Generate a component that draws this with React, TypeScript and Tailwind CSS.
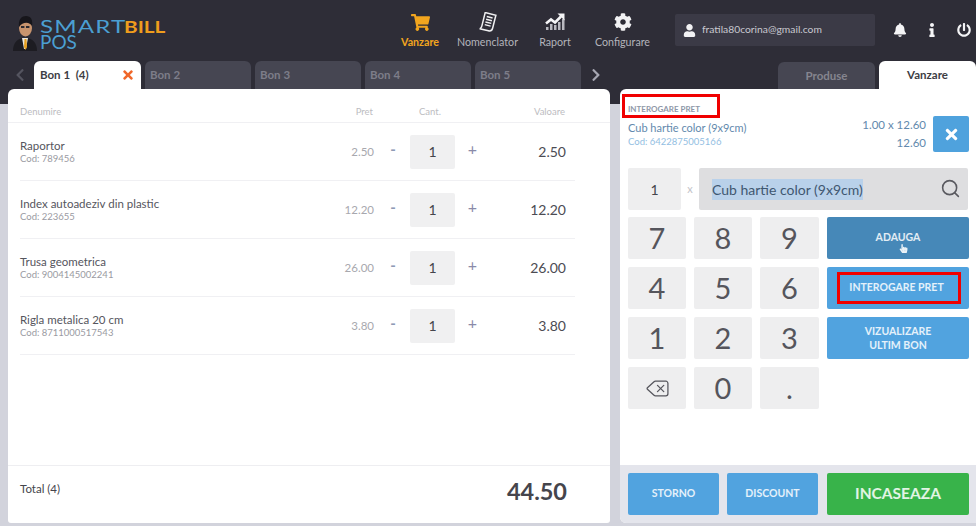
import React from "react";
import { FaShoppingCart, FaCog, FaUser, FaBell, FaInfo, FaPowerOff, FaTimes, FaChevronLeft, FaChevronRight, FaHandPointer } from "react-icons/fa";
import { Delete, Search } from "lucide-react";

const font = { fontFamily: "Lato, 'Open Sans', sans-serif" };

function Man() {
  return (
    <svg width="26" height="36" viewBox="0 0 26 36">
      <path d="M1 36 C1 27 6 23 13 23 C20 23 25 27 25 36 Z" fill="#1d1c22" />
      <path d="M10 23 L16 23 L14 34 L12 34 Z" fill="#e9e6df" />
      <path d="M12.5 24 L14.5 24 L15 32 L13.5 35 L12 32 Z" fill="#e8a020" />
      <ellipse cx="13.5" cy="13" rx="6.5" ry="8.5" fill="#c8946e" />
      <path d="M7 12 C6 4 10 1 14 1 C19 1 21 5 20 11 C18 7 11 6 7 12 Z" fill="#17161b" />
      <rect x="9" y="11" width="3.4" height="2" fill="#2b2a30" />
      <rect x="14" y="11" width="3.4" height="2" fill="#2b2a30" />
    </svg>
  );
}

function Receipt() {
  return (
    <svg width="20" height="20" viewBox="0 0 20 20" fill="none">
      <g transform="rotate(14 10 10)">
        <path d="M5 1.5 H16 V15 C16 17.5 14.5 18.5 12.5 18.5 H3.5 C5 18 5 16.5 5 15 Z" fill="#2e2d37" stroke="#f0f0f2" strokeWidth="1.5" />
        <path d="M7.5 5 H13.5 M7.5 7.8 H13.5 M7.5 10.6 H13.5 M7.5 13.4 H13.5" stroke="#f0f0f2" strokeWidth="1.4" />
      </g>
    </svg>
  );
}

function Chart() {
  return (
    <svg width="20" height="18" viewBox="0 0 20 18">
      <path d="M1 17 V14 H3.5 V17 Z M5 17 V11 H7.5 V17 Z M9 17 V12 H11.5 V17 Z M13 17 V9 H15.5 V17 Z M17 17 V6 H19.5 V17 Z" fill="#b9b9c0" />
      <path d="M1 10.5 L6 6.5 L10 9.5 L16 3.5" stroke="#f5f5f7" strokeWidth="2.6" fill="none" />
      <path d="M12.5 0.5 H19.5 V7.5 Z" fill="#f5f5f7" />
    </svg>
  );
}

function NavItem({ icon, label, active, w }: { icon: React.ReactNode; label: string; active?: boolean; w: string }) {
  return (
    <div className={`flex flex-col items-center ${w}`}>
      <div className="h-[24px] flex items-center justify-center">{icon}</div>
      <span className={`mt-[1px] text-[10.7px] leading-[14px] whitespace-nowrap ${active ? "text-[#f2a51e] font-bold" : "text-[#b4b4bb]"}`}>{label}</span>
    </div>
  );
}

function BonTab({ label }: { label: string }) {
  return (
    <div className="w-[106px] h-[28px] rounded-t-[6px] bg-[#464652] pl-[5px] flex items-center text-[11.5px] font-bold text-[#7d7d89]">{label}</div>
  );
}

const rows = [
  { name: "Raportor", code: "Cod: 789456", price: "2.50" },
  { name: "Index autoadeziv din plastic", code: "Cod: 223655", price: "12.20" },
  { name: "Trusa geometrica", code: "Cod: 9004145002241", price: "26.00" },
  { name: "Rigla metalica 20 cm", code: "Cod: 8711000517543", price: "3.80" },
];

function Row({ name, code, price }: { name: string; code: string; price: string }) {
  return (
    <div className="h-[58px] mx-[12px] w-[555px] border-b border-[#f0f0f3] flex items-center relative">
      <div className="w-[280px] mt-[1px]">
        <div className="text-[11.5px] leading-[14px] text-[#55555d]">{name}</div>
        <div className="text-[9.5px] leading-[12px] text-[#9a9aa2]">{code}</div>
      </div>
      <div className="w-[74px] text-right text-[11.5px] text-[#a8a8ae]">{price}</div>
      <div className="w-[36px] text-center text-[15px] text-[#8e9ab5] -mt-[4px] font-bold pl-[2px]">-</div>
      <div className="w-[45px] h-[34px] bg-[#f0f0f1] rounded-[2px] flex items-center justify-center text-[14px] text-[#45454c]">1</div>
      <div className="w-[35px] text-center text-[16px] text-[#8a8aa8] -mt-[6px]">+</div>
      <div className="flex-1 text-right text-[14px] text-[#4c4c53] pr-[9px]">{price}</div>
    </div>
  );
}

function Key({ children }: { children: React.ReactNode }) {
  return (
    <div className="h-[42px] bg-[#eeeeef] rounded-[2px] flex items-center justify-center text-[29px] font-normal text-[#55555c]">{children}</div>
  );
}

function Action({ children, className }: { children: React.ReactNode; className: string }) {
  return (
    <div className={`h-[42px] rounded-[2px] flex items-center justify-center text-center font-bold text-white/85 ${className}`}>{children}</div>
  );
}

export default function App() {
  return (
    <div style={font} className="w-[976px] h-[526px] bg-[#d2d3dc] overflow-hidden flex flex-col">
      <div className="h-[104px] bg-[#2e2d37] shrink-0">
        <div className="h-[61px] flex items-start relative">
          <div className="ml-[12px] mt-[15px] flex items-start">
            <Man />
            <div className="ml-[2px] mt-[5px] flex flex-col">
              <div className="flex h-[13px] text-[17px] leading-[13px] whitespace-nowrap">
                <span className="w-[84px] inline-block origin-left scale-x-[1.42] text-[#4b9fd2] tracking-[0.8px]">SMART</span>
                <span className="inline-block origin-left scale-x-[1.22] text-[#ef9d1d] font-bold">BILL</span>
              </div>
              <div className="text-[19px] leading-[15px] mt-[1px] text-[#4b9fd2]">POS</div>
            </div>
          </div>
          <div className="absolute left-[390px] top-[10px] flex">
            <NavItem w="w-[60px]" active label="Vanzare" icon={<FaShoppingCart className="text-[#f2a51e]" size={19} />} />
            <NavItem w="w-[75px]" label="Nomenclator" icon={<Receipt />} />
            <NavItem w="w-[60px]" label="Raport" icon={<Chart />} />
            <NavItem w="w-[75px]" label="Configurare" icon={<FaCog className="text-[#f2f2f4]" size={18} />} />
          </div>
          <div className="absolute left-[675px] top-[14px] w-[200px] h-[32px] bg-[#3b3a46] rounded-[2px] flex items-center pl-[8px] text-[10.3px] text-[#c9c9d0]">
            <FaUser className="text-[#f2f2f4] mr-[6px]" size={13} />
            fratila80corina@gmail.com
          </div>
          <div className="absolute left-[893px] top-[23px] flex items-center text-[#f4f4f6]">
            <FaBell size={14} />
            <span className="ml-[18px]"><FaInfo size={14} /></span>
            <span className="ml-[18px]"><FaPowerOff size={14} /></span>
          </div>
        </div>
        <div className="h-[28px] flex items-end">
          <div className="w-[34px] flex justify-center pl-[6px] h-full items-center">
            <FaChevronLeft className="text-[#54545f]" size={14} />
          </div>
          <div className="w-[107px] h-[28px] rounded-t-[6px] bg-white flex items-center pl-[6px] pr-[6px] justify-between text-[11.5px] text-[#3d3d44] font-bold">
            <span className="whitespace-pre">Bon 1  (4)</span>
            <FaTimes className="text-[#f0672a]" size={14} />
          </div>
          <div className="flex gap-[4px] ml-[4px]">
            {["Bon 2", "Bon 3", "Bon 4", "Bon 5"].map((b) => <BonTab key={b} label={b} />)}
          </div>
          <div className="w-[30px] flex justify-center h-full items-center">
            <FaChevronRight className="text-[#a6a6b2]" size={14} />
          </div>
          <div className="ml-auto flex gap-[4px] items-end">
            <div className="w-[97px] h-[27px] rounded-t-[6px] bg-[#464652] flex items-center justify-center text-[11.5px] font-bold text-[#85858f]">Produse</div>
            <div className="w-[97px] h-[28px] rounded-t-[6px] bg-white flex items-center justify-center text-[11.5px] font-bold text-[#3d3d44]">Vanzare</div>
          </div>
        </div>
      </div>

      <div className="-mt-[15px] h-[434px] flex items-stretch shrink-0">
        <div className="ml-[8px] w-[602px] bg-white rounded-t-[6px] rounded-b-[3px] flex flex-col">
          <div className="h-[34px] border-b border-[#f0f0f3] flex items-center text-[9.5px] text-[#bcbcc1] pt-[14px] relative shrink-0">
            <span className="ml-[12px] w-[280px]">Denumire</span>
            <span className="w-[74px] text-right -ml-[1px]">Pret</span>
            <span className="w-[114px] text-center">Cant.</span>
            <span className="w-[78px] text-right">Valoare</span>
          </div>
          {rows.map((r) => <Row key={r.name} {...r} />)}
          <div className="mt-auto h-[58px] border-t border-[#eeeef1] flex items-center justify-between pl-[12px] pr-[43px] pb-[6px]">
            <span className="text-[11.5px] text-[#45454c] -mt-[6px]">Total (4)</span>
            <span className="text-[23.5px] font-bold text-[#45454c]">44.50</span>
          </div>
        </div>

        <div className="ml-[10px] w-[356px] bg-white rounded-tl-[6px] rounded-bl-[6px] flex flex-col relative">
          <div className="absolute left-[2px] top-[5px] w-[98px] h-[24px] border-[3px] border-[#f00000]" />
          <div className="h-[79px] pl-[8px] pr-[7px] relative shrink-0">
            <div className="pt-[15px] text-[8px] leading-[10px] font-bold text-[#8f98a8]">INTEROGARE PRET</div>
            <div className="flex justify-between mt-[7px]">
              <div>
                <div className="text-[11px] leading-[14px] text-[#6289ad]">Cub hartie color (9x9cm)</div>
                <div className="text-[9.5px] leading-[13px] text-[#93bee2]">Cod: 6422875005166</div>
              </div>
              <div className="flex items-start -mt-[5px]">
                <div className="text-right text-[11.5px] leading-[18px] text-[#6289ad] mr-[7px]">
                  <div>1.00 x 12.60</div>
                  <div>12.60</div>
                </div>
                <div className="w-[36px] h-[36px] rounded-[2px] bg-[#4fa2dd] flex items-center justify-center">
                  <FaTimes className="text-white" size={17} />
                </div>
              </div>
            </div>
          </div>
          <div className="h-[42px] mx-[8px] flex items-center shrink-0">
            <div className="w-[53px] h-full bg-[#eeeeef] rounded-[2px] flex items-center justify-center text-[14px] text-[#45454c]">1</div>
            <div className="w-[18px] text-center text-[11px] text-[#c3c3c8]">x</div>
            <div className="flex-1 h-full bg-[#dedee0] rounded-[2px] flex items-center pl-[13px] pr-[7px] justify-between">
              <span className="bg-[#b9d1ea] text-[14px] leading-[21px] text-[#3f5770]">Cub hartie color (9x9cm)</span>
              <Search className="text-[#5a5a60] -mt-[2px]" size={21} strokeWidth={1.8} />
            </div>
          </div>
          <div className="mx-[8px] mt-[7px] grid grid-cols-[58px_58px_59px_142px] gap-x-[8px] gap-y-[8px] shrink-0">
            <Key>7</Key><Key>8</Key><Key>9</Key>
            <Action className="bg-[#4688b8] text-[10.5px] relative">
              ADAUGA
              <FaHandPointer className="absolute left-[72px] top-[27px] text-white/90" size={9} />
            </Action>
            <Key>4</Key><Key>5</Key><Key>6</Key>
            <Action className="bg-[#51a3df] text-[10.5px] relative pr-[3px]">
              INTEROGARE PRET
              <span className="absolute left-[10px] top-[5px] w-[124px] h-[32px] border-[3px] border-[#f00000]" />
            </Action>
            <Key>1</Key><Key>2</Key><Key>3</Key>
            <Action className="bg-[#51a3df] text-[10.5px] leading-[14px]"><span>VIZUALIZARE<br />ULTIM BON</span></Action>
            <Key><Delete size={25} strokeWidth={1.2} className="text-[#55555c]" /></Key>
            <Key>0</Key>
            <Key>.</Key>
          </div>
          <div className="mt-auto h-[58px] bg-[#e4e5ec] pt-[8px] pl-[8px] flex gap-[8px] shrink-0 rounded-bl-[6px]">
            <Action className="w-[91px] bg-[#51a3df] text-[10.5px]">STORNO</Action>
            <Action className="w-[91px] bg-[#51a3df] text-[10.5px]">DISCOUNT</Action>
            <Action className="w-[142px] ml-[1px] bg-[#38b34a] text-[15.5px]">INCASEAZA</Action>
          </div>
        </div>
      </div>
    </div>
  );
}
